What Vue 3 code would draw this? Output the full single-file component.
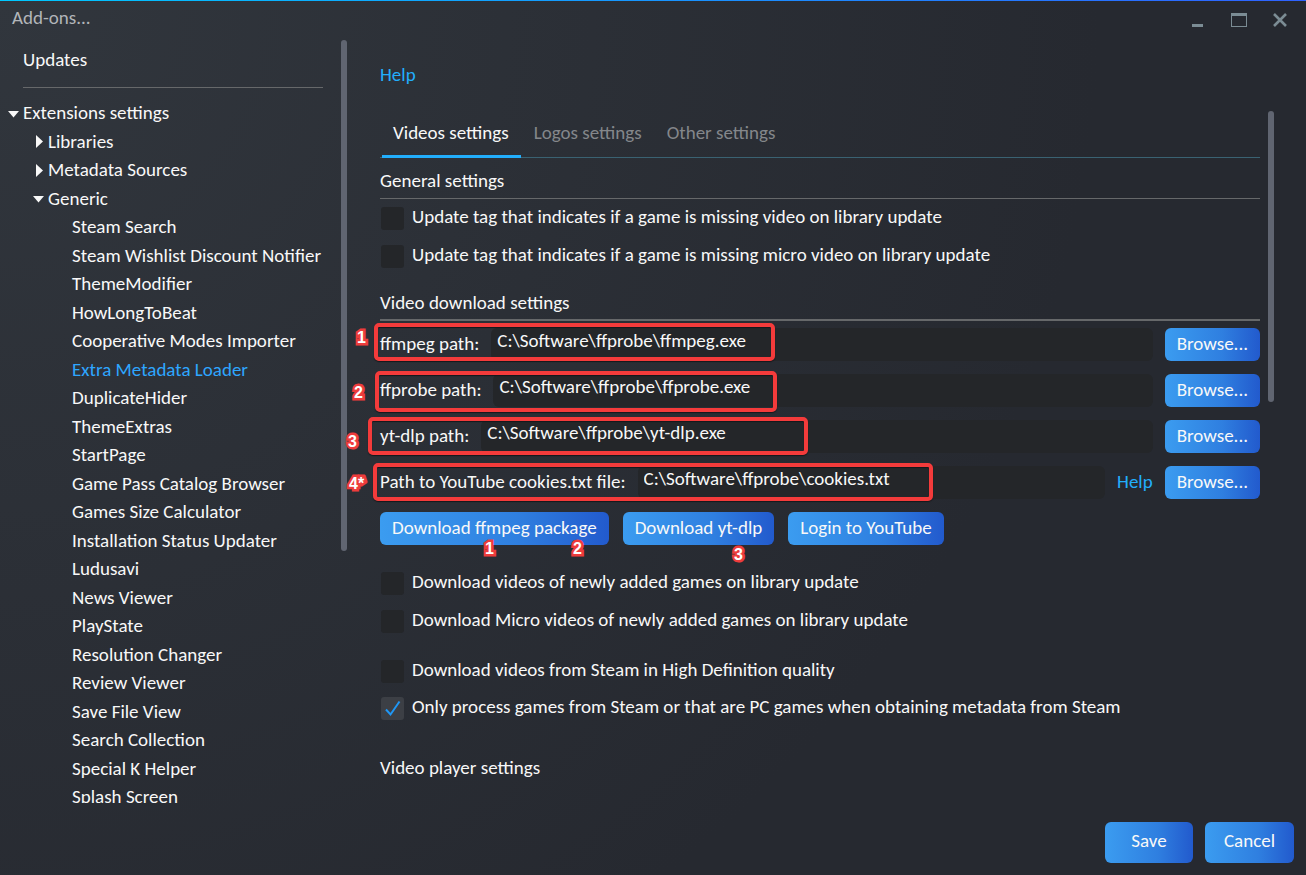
<script setup>
import { ref } from 'vue'

const plugins = [
  'Steam Search',
  'Steam Wishlist Discount Notifier',
  'ThemeModifier',
  'HowLongToBeat',
  'Cooperative Modes Importer',
  'Extra Metadata Loader',
  'DuplicateHider',
  'ThemeExtras',
  'StartPage',
  'Game Pass Catalog Browser',
  'Games Size Calculator',
  'Installation Status Updater',
  'Ludusavi',
  'News Viewer',
  'PlayState',
  'Resolution Changer',
  'Review Viewer',
  'Save File View',
  'Search Collection',
  'Special K Helper',
  'Splash Screen',
]
const selected = ref('Extra Metadata Loader')

const tabs = ['Videos settings', 'Logos settings', 'Other settings']
const activeTab = ref(tabs[0])

const paths = ref([
  { id: 'ffmpeg', label: 'ffmpeg path:', value: 'C:\\Software\\ffprobe\\ffmpeg.exe', mark: '1' },
  { id: 'ffprobe', label: 'ffprobe path:', value: 'C:\\Software\\ffprobe\\ffprobe.exe', mark: '2' },
  { id: 'ytdlp', label: 'yt-dlp path:', value: 'C:\\Software\\ffprobe\\yt-dlp.exe', mark: '3' },
  { id: 'cookies', label: 'Path to YouTube cookies.txt file:', value: 'C:\\Software\\ffprobe\\cookies.txt', mark: '4*', help: true },
])

const tagOptions = ref([
  { id: 'tag-video', label: 'Update tag that indicates if a game is missing video on library update', on: false },
  { id: 'tag-micro', label: 'Update tag that indicates if a game is missing micro video on library update', on: false },
])
const newGameOptions = ref([
  { id: 'new-video', label: 'Download videos of newly added games on library update', on: false },
  { id: 'new-micro', label: 'Download Micro videos of newly added games on library update', on: false },
])
const steamOptions = ref([
  { id: 'hd', label: 'Download videos from Steam in High Definition quality', on: false },
  { id: 'pc-only', label: 'Only process games from Steam or that are PC games when obtaining metadata from Steam', on: true },
])
</script>

<template>
  <div class="window">
    <header class="titlebar">
      <h1>Add-ons...</h1>
      <div class="controls">
        <button type="button" aria-label="Minimize">
          <svg width="16" height="16" viewBox="0 0 16 16"><path d="M2 11h11v3H2z" fill="#7b8c94" /></svg>
        </button>
        <button type="button" aria-label="Maximize">
          <svg width="18" height="16" viewBox="0 0 18 16"><path d="M1 0h16v14H1zM2 3v10h14V3z" fill="#7b8c94" fill-rule="evenodd" /></svg>
        </button>
        <button type="button" aria-label="Close">
          <svg width="16" height="16" viewBox="0 0 16 16"><path d="M2 1l12 12M14 1L2 13" stroke="#7b8c94" stroke-width="2.600" /></svg>
        </button>
      </div>
    </header>

    <div class="body">
      <nav class="sidebar">
        <div class="tree-scroll">
          <a href="#" class="updates">Updates</a>
          <ul class="tree">
            <li class="lvl0"><svg class="arrow" viewBox="0 0 11 7"><path d="M0 0h11L5.500 6.500z" /></svg><span>Extensions settings</span></li>
            <li class="lvl1"><svg class="arrow side" viewBox="0 0 7 13"><path d="M0 0v13L7 6.500z" /></svg><span>Libraries</span></li>
            <li class="lvl1"><svg class="arrow side" viewBox="0 0 7 13"><path d="M0 0v13L7 6.500z" /></svg><span>Metadata Sources</span></li>
            <li class="lvl1"><svg class="arrow" viewBox="0 0 11 7"><path d="M0 0h11L5.500 6.500z" /></svg><span>Generic</span></li>
            <li v-for="p in plugins" :key="p" class="lvl2">
              <a href="#" :class="{ current: p === selected }" @click.prevent="selected = p">{{ p }}</a>
            </li>
          </ul>
        </div>
        <div class="track"><div class="thumb tree-thumb"></div></div>
      </nav>

      <main class="content">
        <a href="#" class="link top-help">Help</a>
        <div class="pane">
          <div class="settings">
            <div class="tabs" role="tablist">
              <button
                v-for="t in tabs"
                :key="t"
                type="button"
                role="tab"
                :aria-selected="t === activeTab"
                :class="{ active: t === activeTab }"
                @click="activeTab = t"
              >{{ t }}</button>
            </div>

            <h2>General settings</h2>
            <div class="checks first">
              <label v-for="o in tagOptions" :key="o.id" class="check">
                <input v-model="o.on" type="checkbox" /><span>{{ o.label }}</span>
              </label>
            </div>

            <h2 class="thick">Video download settings</h2>
            <div class="paths">
              <div v-for="p in paths" :key="p.id" class="path-row">
                <label :for="p.id">{{ p.label }}</label>
                <input :id="p.id" v-model="p.value" type="text" />
                <a v-if="p.help" href="#" class="link">Help</a>
                <button type="button" class="btn">Browse...</button>
                <span class="frame" :class="p.id"></span>
                <span class="mark" :class="'at-' + p.id">{{ p.mark }}</span>
              </div>
            </div>

            <div class="actions">
              <button type="button" class="btn">Download ffmpeg package</button>
              <button type="button" class="btn">Download yt-dlp</button>
              <button type="button" class="btn">Login to YouTube</button>
              <span class="mark a1">1</span>
              <span class="mark a2">2</span>
              <span class="mark a3">3</span>
            </div>

            <div class="checks">
              <label v-for="o in newGameOptions" :key="o.id" class="check">
                <input v-model="o.on" type="checkbox" /><span>{{ o.label }}</span>
              </label>
            </div>
            <div class="checks steam">
              <label v-for="o in steamOptions" :key="o.id" class="check">
                <input v-model="o.on" type="checkbox" /><span>{{ o.label }}</span>
                <svg v-if="o.on" class="tick" viewBox="0 0 23 23"><path d="M5 13.500L9.500 18.500L18.500 5.500" /></svg>
              </label>
            </div>

            <h2 class="last">Video player settings</h2>
          </div>
          <div class="track"><div class="thumb pane-thumb"></div></div>
        </div>
      </main>
    </div>

    <footer class="footer">
      <button type="button" class="btn big">Save</button>
      <button type="button" class="btn big">Cancel</button>
    </footer>
  </div>
</template>

<style>
body {
  margin: 0;
  background: #26292f;
}
</style>

<style scoped>
* {
  box-sizing: border-box;
}
.window {
  display: flex;
  flex-direction: column;
  height: 100vh;
  min-height: 640px;
  overflow: hidden;
  color: #f8f8f8;
  font: 19px/24px Carlito, Lato, "Noto Sans", sans-serif;
  background: radial-gradient(circle at 0 0, #31363d 0, #262930 1100px);
}
.window::before {
  content: "";
  flex: none;
  height: 1px;
  background: linear-gradient(90deg, #00c8ff, #2f62ff);
}
button,
input {
  font: inherit;
  color: inherit;
}
button {
  border: 0;
  cursor: pointer;
}
a {
  color: inherit;
  text-decoration: none;
}
h1,
h2 {
  margin: 0;
  font-size: 19px;
  font-weight: 400;
}
.titlebar {
  display: flex;
  flex: none;
  justify-content: space-between;
  height: 39px;
  padding: 5px 18px 0 12px;
}
.titlebar h1 {
  color: #b2b5b9;
}
.controls {
  display: flex;
  gap: 24px;
  height: 29px;
}
.controls button {
  display: flex;
  align-items: center;
  padding: 0;
  background: none;
}
.body {
  display: flex;
  flex: 1;
  min-height: 0;
}
.sidebar {
  display: flex;
  flex: none;
  width: 347px;
}
.tree-scroll {
  flex: 1;
  overflow: hidden;
}
.updates {
  display: block;
  height: 48px;
  margin: 0 18px 0 23px;
  padding-top: 8px;
  border-bottom: 1px solid #66686a;
}
.tree {
  margin: 11px 0 0;
  padding: 0;
  list-style: none;
  white-space: nowrap;
}
.tree li {
  display: flex;
  align-items: center;
  height: 28px;
}
.tree li:nth-child(even) {
  height: 29px;
}
.tree .lvl0 {
  padding-left: 8px;
}
.tree .lvl1 {
  padding-left: 33px;
}
.tree .lvl2 {
  padding-left: 72px;
}
.arrow {
  width: 11px;
  height: 7px;
  margin: 2px 4px 0 0;
  fill: #f8f8f8;
}
.arrow.side {
  width: 7px;
  height: 13px;
  margin: 0 5px 0 3px;
}
.current {
  color: #2ea6ff;
}
.track {
  flex: none;
  width: 6px;
}
.thumb {
  border-radius: 3px;
  background: #606571;
}
.tree-thumb {
  height: 67%;
}
.pane-thumb {
  height: 42%;
}
.content {
  display: flex;
  flex: 1;
  flex-direction: column;
  min-width: 0;
  padding: 23px 32px 0 33px;
}
.link {
  color: #22aefc;
}
.top-help {
  align-self: flex-start;
}
.pane {
  display: flex;
  flex: 1;
  gap: 8px;
  min-height: 0;
  margin-top: 24px;
}
.settings {
  flex: 1;
  min-width: 0;
}
.tabs {
  display: flex;
  gap: 2px;
  height: 47px;
  padding-left: 2px;
  border-bottom: 1px solid #3a6272;
}
.tabs button {
  height: 47px;
  padding: 0 12px 0 11px;
  border-bottom: 3px solid transparent;
  background: none;
  color: #84878b;
}
.tabs .active {
  color: #f8f8f8;
  border-bottom-color: #22aefc;
}
h2 {
  height: 41px;
  padding-top: 11px;
  border-bottom: 1px solid #66686a;
}
h2.thick {
  border-bottom-width: 2px;
}
h2.last {
  border: 0;
}
.checks {
  display: grid;
  gap: 14px;
  padding: 26px 0 14px;
}
.checks.first {
  padding: 7px 0 12px;
}
.checks.steam {
  gap: 13px;
  padding: 12px 0 25px;
}
.check {
  position: relative;
  display: flex;
  align-items: center;
  gap: 8px;
  justify-self: start;
  padding-left: 1px;
}
.check span {
  padding-bottom: 2px;
  line-height: 22px;
}
.check input {
  appearance: none;
  width: 23px;
  height: 23px;
  margin: 0;
  border-radius: 3px;
  background: #242629;
}
.check input:checked {
  background: #3c3f45;
}
.tick {
  position: absolute;
  left: 1px;
  top: 0;
  width: 23px;
  height: 23px;
  fill: none;
  stroke: #1f97f5;
  stroke-width: 2;
}
.paths {
  display: grid;
  gap: 13px;
  padding-top: 7px;
}
.path-row {
  position: relative;
  display: flex;
  align-items: center;
  gap: 12px;
  height: 33px;
}
.path-row label,
.path-row .link {
  padding-bottom: 2px;
}
.path-row input {
  flex: 1;
  min-width: 0;
  height: 33px;
  padding: 0 6px 8px;
  border: 0;
  border-radius: 6px;
  outline: 0;
  background: #242629;
}
.btn {
  height: 33px;
  padding: 0 12px 2px;
  border-radius: 6px;
  background: linear-gradient(90deg, #3b9cf0, #2f7fe0 60%, #225acd);
  white-space: nowrap;
}
/* Callout frames and numbers laid over the form */
.frame {
  position: absolute;
  left: -6px;
  top: -5px;
  width: 401px;
  height: 38px;
  border: 4px solid #f43b3b;
  border-radius: 5px;
  box-shadow: 0 1px 1px #16181b, inset 0 1px 1px #16181b;
  pointer-events: none;
}
.frame.ffprobe {
  left: -5px;
  top: -3px;
  width: 402px;
  height: 41px;
}
.frame.ytdlp {
  left: -12px;
  top: -3px;
  width: 440px;
}
.frame.cookies {
  left: -7px;
  top: -3px;
  width: 560px;
}
.mark {
  position: absolute;
  color: #fff;
  font: 700 16px/20px "Liberation Sans", Arial, sans-serif;
  -webkit-text-stroke: 5px #ee3c3c;
  paint-order: stroke fill;
  stroke-linejoin: round;
  pointer-events: none;
}
.at-ffmpeg {
  left: -23px;
  top: 0;
}
.at-ffprobe {
  left: -26px;
  top: 9px;
}
.at-ytdlp {
  left: -32px;
  top: 12px;
}
.at-cookies {
  left: -31px;
  top: 8px;
}
.actions {
  position: relative;
  display: flex;
  gap: 14px;
  margin-top: 13px;
}
.a1 {
  left: 105px;
  top: 27px;
}
.a2 {
  left: 193px;
  top: 27px;
}
.a3 {
  left: 354px;
  top: 33px;
}
.footer {
  display: flex;
  flex: none;
  justify-content: flex-end;
  gap: 12px;
  padding: 19px 12px 12px;
}
.big {
  height: 41px;
  min-width: 88px;
  padding: 0 19px 3px;
}
</style>
